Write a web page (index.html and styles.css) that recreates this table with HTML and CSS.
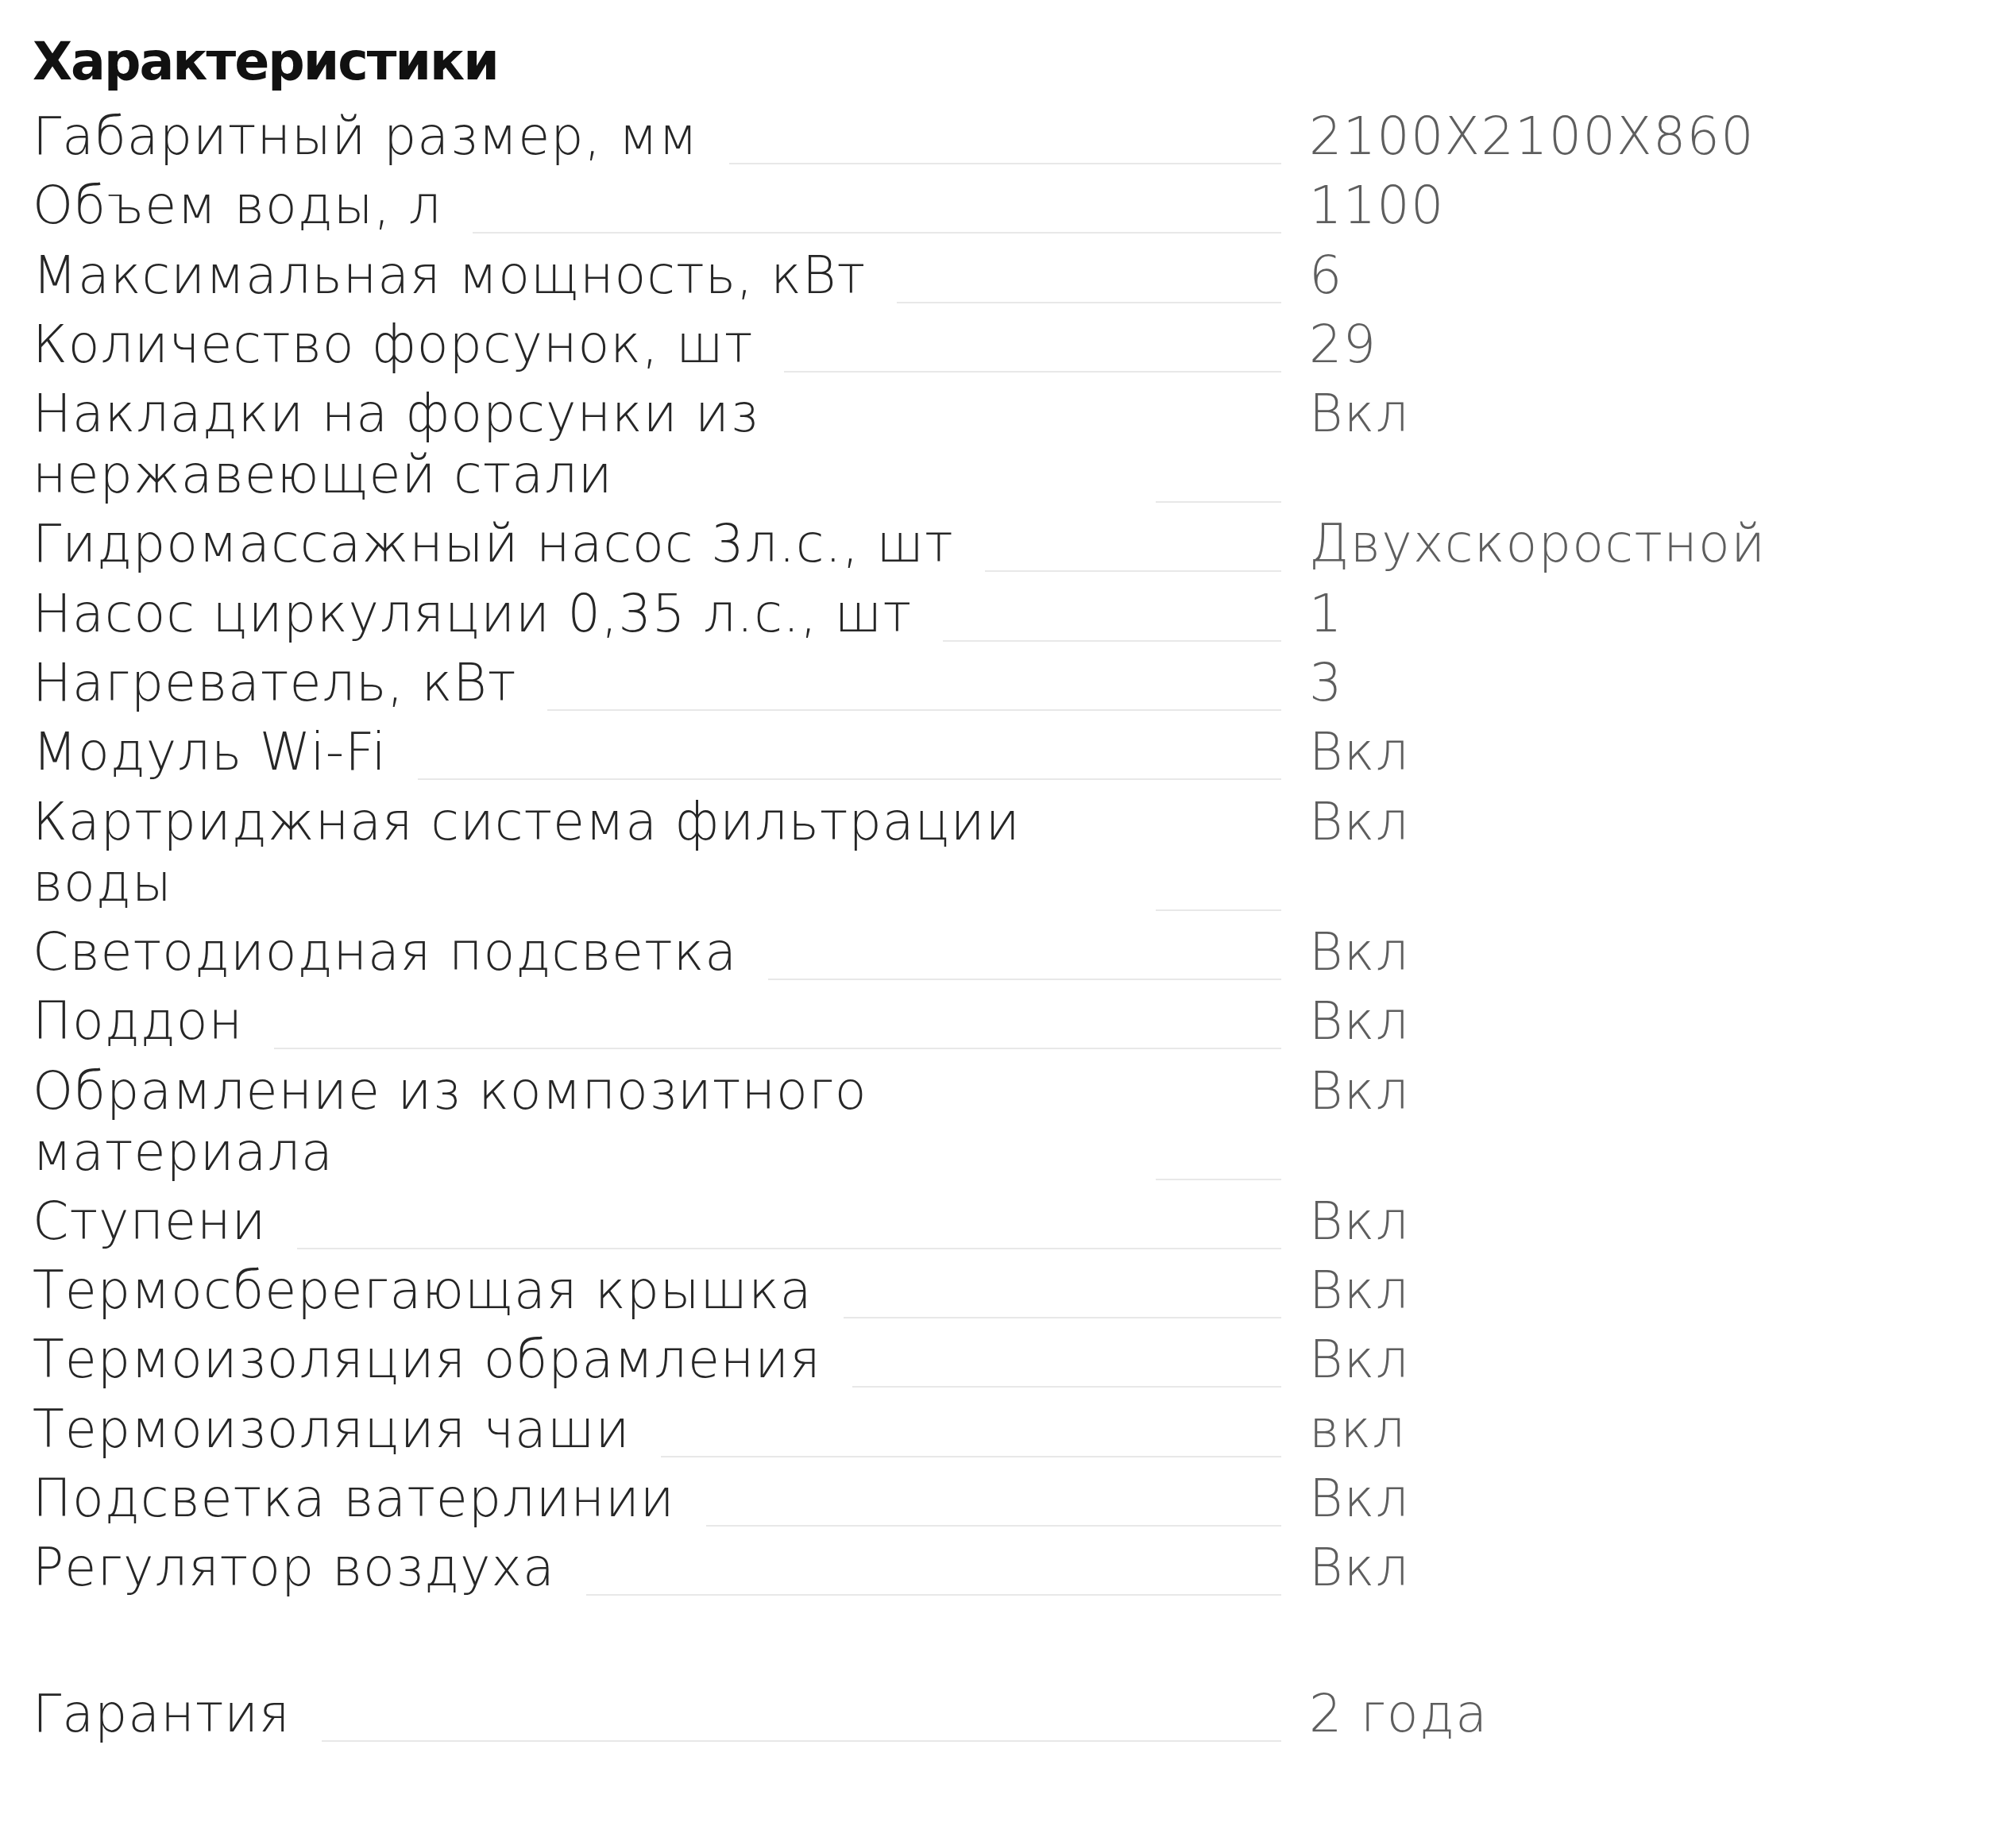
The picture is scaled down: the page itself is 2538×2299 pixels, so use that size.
FILE: index.html
```html
<!DOCTYPE html>
<html lang="ru">
<head>
<meta charset="utf-8">
<title>Характеристики</title>
<link rel="stylesheet" href="styles.css">
</head>
<body>
<section class="specs">
  <h2 class="specs-title">Характеристики</h2>
  <ul class="spec-list">
    <li class="spec-row"><div class="spec-name"><span class="spec-label">Габаритный размер, мм</span><span class="spec-leader"></span></div><div class="spec-value">2100X2100X860</div></li>
    <li class="spec-row"><div class="spec-name"><span class="spec-label">Объем воды, л</span><span class="spec-leader"></span></div><div class="spec-value">1100</div></li>
    <li class="spec-row"><div class="spec-name"><span class="spec-label">Максимальная мощность, кВт</span><span class="spec-leader"></span></div><div class="spec-value">6</div></li>
    <li class="spec-row"><div class="spec-name"><span class="spec-label">Количество форсунок, шт</span><span class="spec-leader"></span></div><div class="spec-value">29</div></li>
    <li class="spec-row"><div class="spec-name"><span class="spec-label">Накладки на форсунки из нержавеющей стали</span><span class="spec-leader"></span></div><div class="spec-value">Вкл</div></li>
    <li class="spec-row"><div class="spec-name"><span class="spec-label">Гидромассажный насос 3л.с., шт</span><span class="spec-leader"></span></div><div class="spec-value">Двухскоростной</div></li>
    <li class="spec-row"><div class="spec-name"><span class="spec-label">Насос циркуляции 0,35 л.с., шт</span><span class="spec-leader"></span></div><div class="spec-value">1</div></li>
    <li class="spec-row"><div class="spec-name"><span class="spec-label">Нагреватель, кВт</span><span class="spec-leader"></span></div><div class="spec-value">3</div></li>
    <li class="spec-row"><div class="spec-name"><span class="spec-label">Модуль Wi-Fi</span><span class="spec-leader"></span></div><div class="spec-value">Вкл</div></li>
    <li class="spec-row"><div class="spec-name"><span class="spec-label">Картриджная система фильтрации воды</span><span class="spec-leader"></span></div><div class="spec-value">Вкл</div></li>
    <li class="spec-row"><div class="spec-name"><span class="spec-label">Светодиодная подсветка</span><span class="spec-leader"></span></div><div class="spec-value">Вкл</div></li>
    <li class="spec-row"><div class="spec-name"><span class="spec-label">Поддон</span><span class="spec-leader"></span></div><div class="spec-value">Вкл</div></li>
    <li class="spec-row"><div class="spec-name"><span class="spec-label">Обрамление из композитного материала</span><span class="spec-leader"></span></div><div class="spec-value">Вкл</div></li>
    <li class="spec-row"><div class="spec-name"><span class="spec-label">Ступени</span><span class="spec-leader"></span></div><div class="spec-value">Вкл</div></li>
    <li class="spec-row"><div class="spec-name"><span class="spec-label">Термосберегающая крышка</span><span class="spec-leader"></span></div><div class="spec-value">Вкл</div></li>
    <li class="spec-row"><div class="spec-name"><span class="spec-label">Термоизоляция обрамления</span><span class="spec-leader"></span></div><div class="spec-value">Вкл</div></li>
    <li class="spec-row"><div class="spec-name"><span class="spec-label">Термоизоляция чаши</span><span class="spec-leader"></span></div><div class="spec-value">вкл</div></li>
    <li class="spec-row"><div class="spec-name"><span class="spec-label">Подсветка ватерлинии</span><span class="spec-leader"></span></div><div class="spec-value">Вкл</div></li>
    <li class="spec-row"><div class="spec-name"><span class="spec-label">Регулятор воздуха</span><span class="spec-leader"></span></div><div class="spec-value">Вкл</div></li>
    <li class="spec-row spec-row--warranty"><div class="spec-name"><span class="spec-label">Гарантия</span><span class="spec-leader"></span></div><div class="spec-value">2 года</div></li>
  </ul>
</section>
</body>
</html>
```
FILE: styles.css
```css
html, body {
  margin: 0;
  padding: 0;
  background: #ffffff;
}

body {
  font-family: "DejaVu Sans", "Open Sans", sans-serif;
}

.specs {
  padding: 39px 0 0 41px;
}

.specs-title {
  margin: 0 0 17px 0;
  font-family: "DejaVu Sans", sans-serif;
  font-weight: 700;
  font-size: 65px;
  line-height: 77px;
  letter-spacing: -2px;
  color: #111111;
}

.spec-list {
  list-style: none;
  margin: 0;
  padding: 0;
}

.spec-row {
  display: grid;
  grid-template-columns: 1572px auto;
  column-gap: 35px;
  align-items: start;
  margin-bottom: 10.3px;
  font-size: 65px;
  line-height: 77px;
  font-weight: 200;
  letter-spacing: 1px;
}

.spec-row--warranty {
  margin-top: 107px;
}

.spec-name {
  display: flex;
  align-items: flex-end;
  align-self: stretch;
}

.spec-label {
  flex: 0 1 auto;
  min-width: 0;
  color: #262626;
}

.spec-leader {
  flex: 1 1 auto;
  min-width: 158px;
  margin-left: 39px;
  margin-bottom: 3px;
  border-bottom: 2px solid #e8e8e8;
}

.spec-value {
  color: #5e5e5e;
  white-space: nowrap;
  letter-spacing: 1.3px;
}
```
